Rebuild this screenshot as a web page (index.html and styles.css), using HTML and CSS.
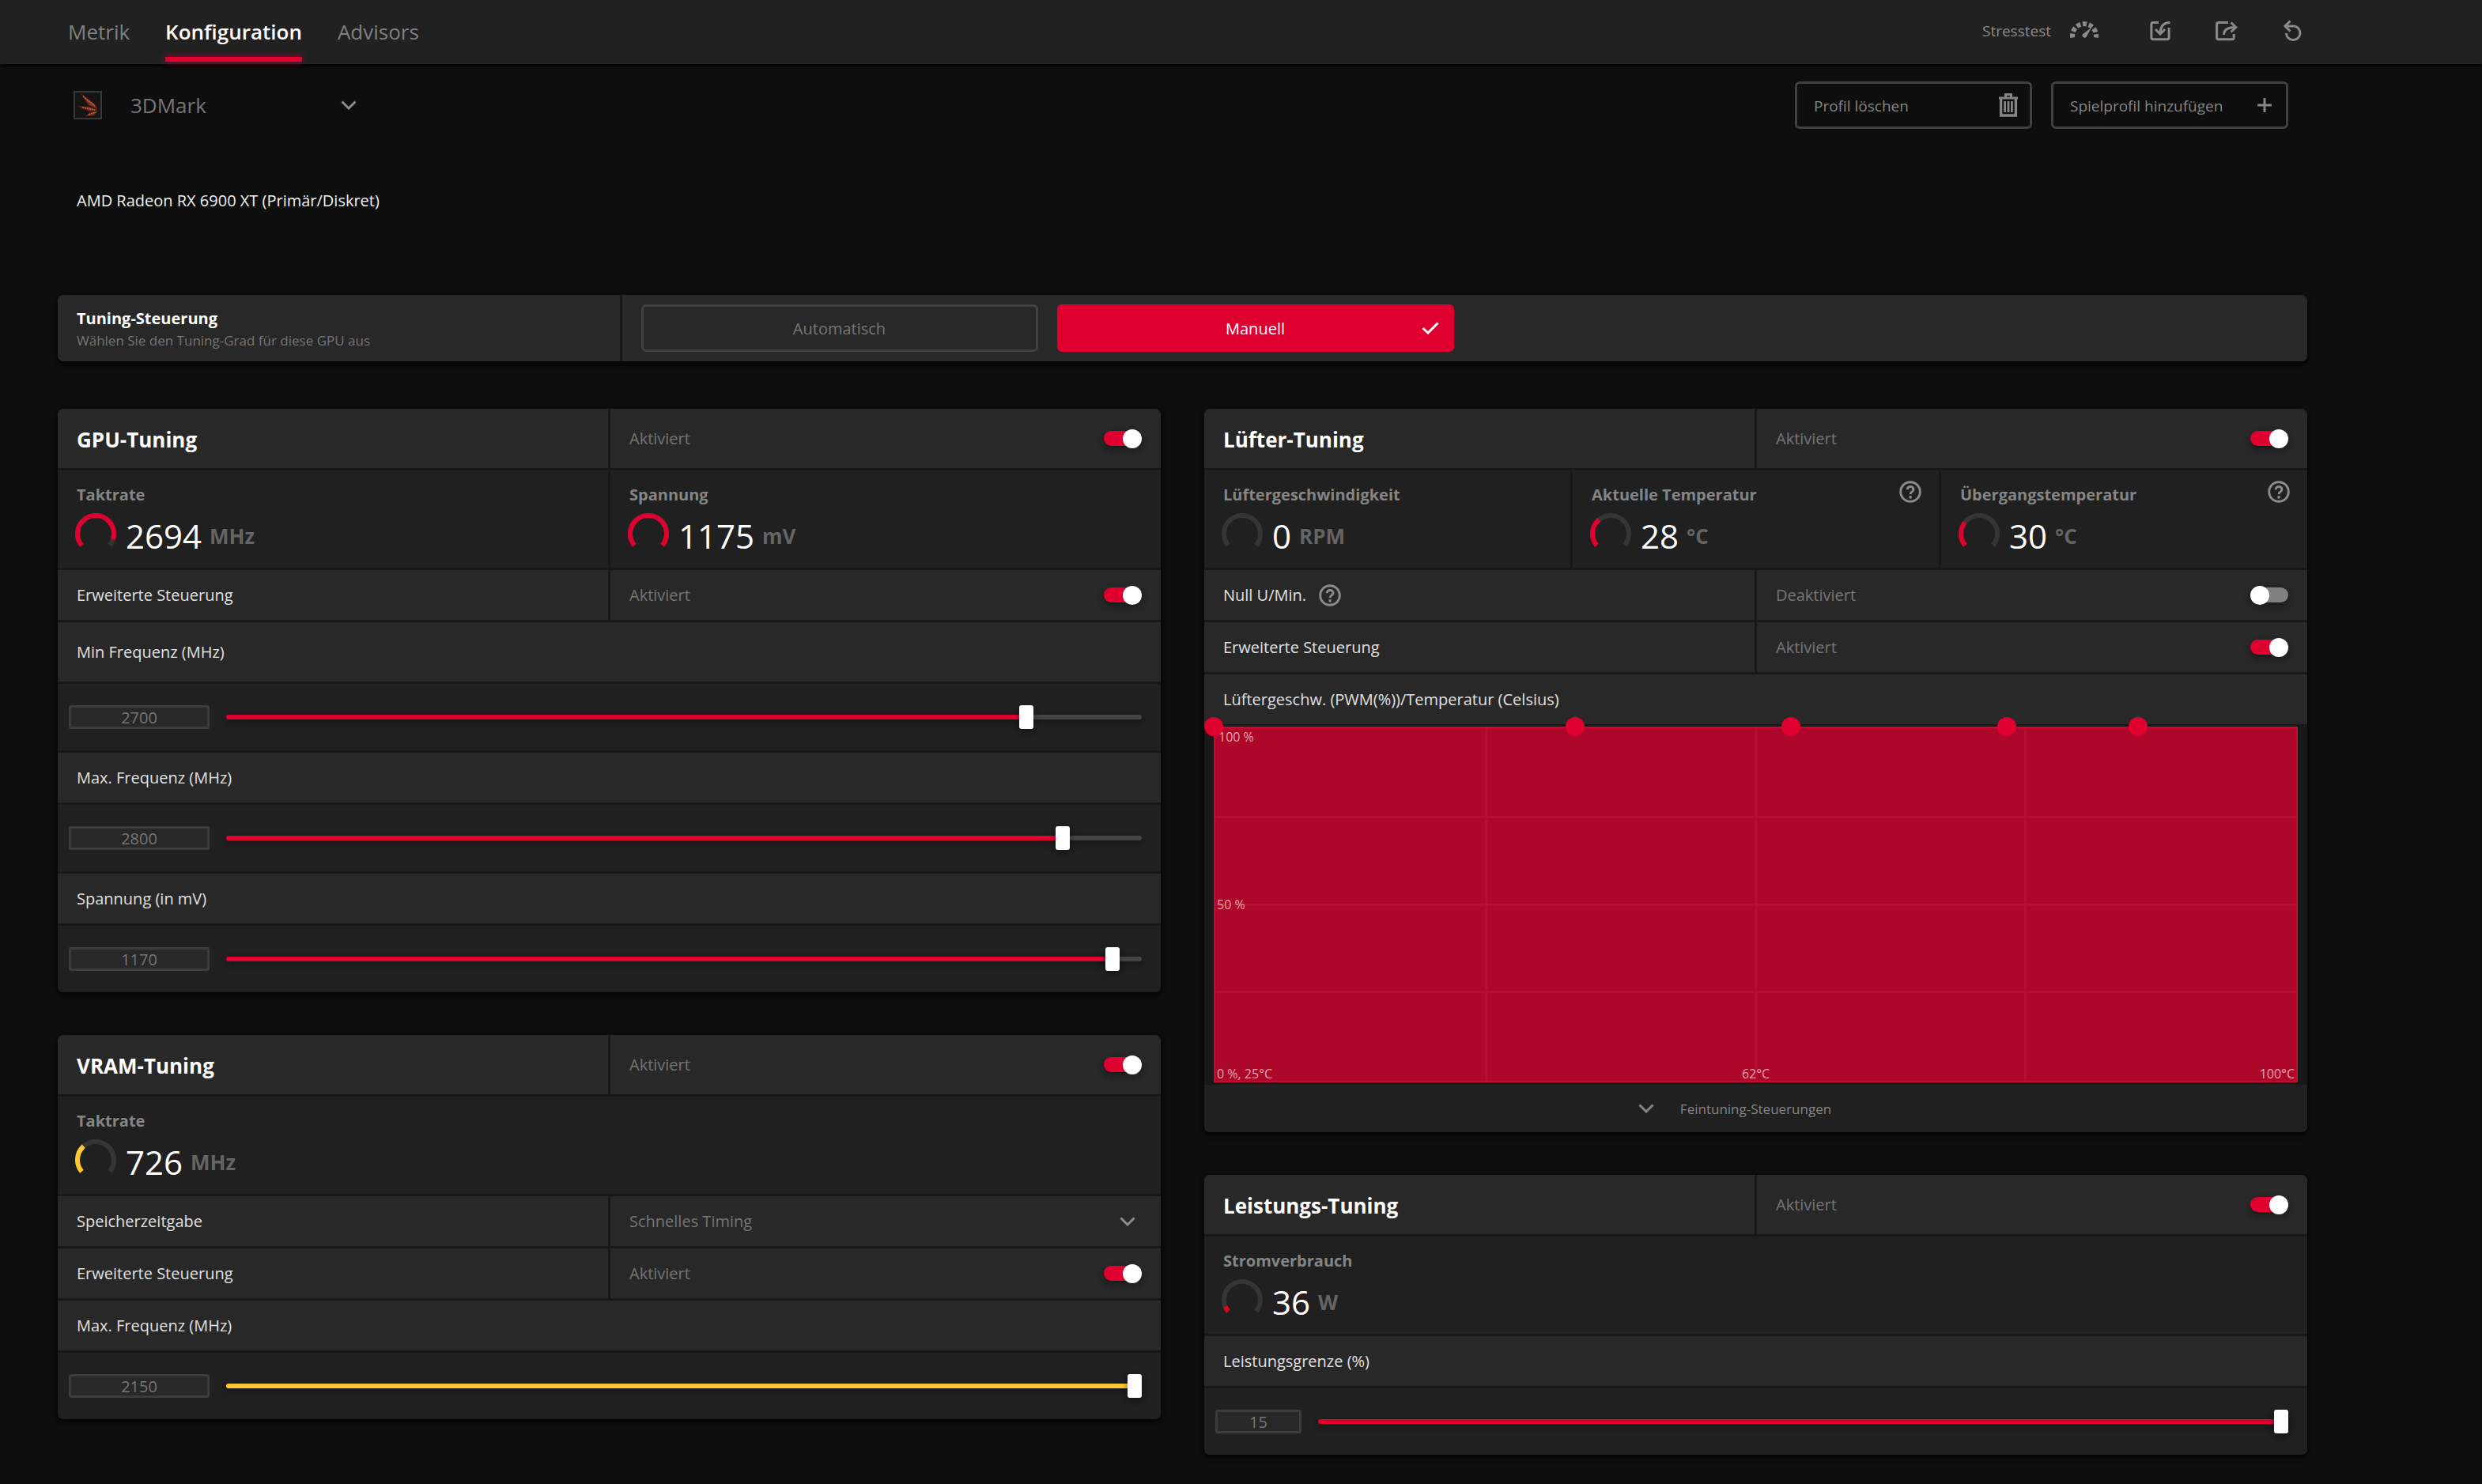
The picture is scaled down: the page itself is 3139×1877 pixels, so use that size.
FILE: index.html
```html
<!DOCTYPE html>
<html lang="de">
<head>
  <meta charset="UTF-8">
  <meta name="viewport" content="width=device-width, initial-scale=1.0">
  <title>Konfiguration</title>
  <link rel="stylesheet" href="styles.css">
</head>
<body>
  <!-- Shared icons -->
  <svg class="sprite" aria-hidden="true">
    <symbol id="icon-chevron" viewBox="0 0 20 12">
      <path d="M1.5 1.5 L10 10 L18.5 1.5" fill="none" stroke="currentColor" stroke-width="3"/>
    </symbol>
    <symbol id="icon-help" viewBox="0 0 28 28">
      <circle cx="14" cy="14" r="12.3" fill="none" stroke="currentColor" stroke-width="3"/>
      <path d="M10.2 11.2 C10.2 6.2 18 6.4 18 11 C18 14 14.1 13.8 14.1 17.2" fill="none" stroke="currentColor" stroke-width="3"/>
      <circle cx="14.1" cy="20.8" r="1.9" fill="currentColor"/>
    </symbol>
    <symbol id="gauge-track" viewBox="0 0 52 46">
      <path d="M8.4 40.8 A23 23 0 1 1 43.6 40.8" fill="none" stroke="#353535" stroke-width="6"/>
    </symbol>
  </svg>

  <header class="topbar">
    <nav class="tabs">
      <a href="#metrik">Metrik</a>
      <a href="#konfiguration" class="active">Konfiguration</a>
      <a href="#advisors">Advisors</a>
    </nav>
    <div class="tools">
      <button class="stress">
        Stresstest
        <svg width="36" height="28" viewBox="0 0 36 28" fill="none" stroke="currentColor">
          <path d="M3.2 22.6 A15 15 0 1 1 32.8 22.6" stroke-width="6" stroke-dasharray="5.2 2.7"/>
          <path d="M27 10 L20.8 21.6 A2.9 2.9 0 1 1 16.2 18 Z" fill="currentColor" stroke="none"/>
        </svg>
      </button>
      <button aria-label="Importieren">
        <svg width="28" height="28" viewBox="0 0 28 28" fill="none" stroke="currentColor" stroke-width="3">
          <path d="M12 3.4 H5 Q2.9 3.4 2.9 5.5 V22.5 Q2.9 24.8 5 24.8 H23 Q25.1 24.8 25.1 22.5 V10"/>
          <path d="M26.5 3.4 Q14 3.5 14 18"/>
          <path d="M8 12 L14 18.2 L20 12"/>
        </svg>
      </button>
      <button aria-label="Exportieren">
        <svg width="28" height="28" viewBox="0 0 28 28" fill="none" stroke="currentColor" stroke-width="3">
          <path d="M16 3.4 H4 Q1.6 3.4 1.6 5.5 V22.5 Q1.6 24.8 4 24.8 H21 Q23.2 24.8 23.2 22.5 V18"/>
          <path d="M10.5 19 Q10.5 9.5 25 9.5"/>
          <path d="M19.5 3.5 L25.8 9.5 L19.5 15.5"/>
        </svg>
      </button>
      <button aria-label="Zurücksetzen">
        <svg width="28" height="28" viewBox="0 0 28 28" fill="none" stroke="currentColor" stroke-width="3">
          <path d="M5 8 H15 A8.8 8.8 0 1 1 5.4 17"/>
          <path d="M10.5 1.5 L4 8 L10.5 14.5"/>
        </svg>
      </button>
    </div>
  </header>

  <main class="page">
    <div class="profile-bar">
      <svg class="logo" width="36" height="36" viewBox="0 0 36 36" aria-hidden="true">
        <rect x="1" y="1" width="34" height="34" fill="#151515" stroke="#383838" stroke-width="2"/>
        <path d="M9 3 L26 16 L31 23 L19 18 Z" fill="#7d2a22"/>
        <path d="M5 19 L20 20 L31 24 L20 26 Z" fill="#742420"/>
        <path d="M15 32 L21 27 L31 25 L26 31 Z" fill="#742420"/>
        <path d="M12 7 L27 19 M11 21 L27 24 M19 30 L28 27" stroke="#c4742a" stroke-width="1.4" stroke-dasharray="2 1" fill="none"/>
      </svg>
      <div class="select profile-select">
        <select aria-label="Profil">
          <option>3DMark</option>
        </select>
        <svg width="20" height="12"><use href="#icon-chevron"/></svg>
      </div>
      <div class="profile-actions">
        <button class="outline-button">
          <span>Profil löschen</span>
          <svg width="24" height="30" viewBox="0 0 24 30" fill="none" stroke="currentColor">
            <path d="M0 6 H24" stroke-width="3"/>
            <path d="M8.5 5 V1.5 H15.5 V5" stroke-width="3"/>
            <path d="M2.6 7 V28 H21.4 V7" stroke-width="3.4"/>
            <path d="M7.6 10 V24 M12 10 V24 M16.4 10 V24" stroke-width="2.8"/>
          </svg>
        </button>
        <button class="outline-button add">
          <span>Spielprofil hinzufügen</span>
          <svg width="18" height="18" viewBox="0 0 18 18" stroke="currentColor" stroke-width="3">
            <path d="M9 0 V18 M0 9 H18"/>
          </svg>
        </button>
      </div>
    </div>

    <p class="device">AMD Radeon RX 6900 XT (Primär/Diskret)</p>

    <!-- Tuning mode -->
    <section class="card mode">
      <div class="cell mode-text">
        <h2>Tuning-Steuerung</h2>
        <p>Wählen Sie den Tuning-Grad für diese GPU aus</p>
      </div>
      <div class="cell mode-buttons">
        <button>Automatisch</button>
        <button class="selected">
          Manuell
          <svg width="22" height="16" viewBox="0 0 22 16"><path d="M1.5 8 L8 14 L20.5 1.5" fill="none" stroke="#fff" stroke-width="3"/></svg>
        </button>
      </div>
    </section>

    <div class="columns">
      <div class="column">
        <!-- GPU -->
        <section class="card">
          <div class="row head">
            <div class="cell"><h2>GPU-Tuning</h2></div>
            <div class="cell"><label for="gpu-on">Aktiviert</label><input type="checkbox" class="switch" id="gpu-on" checked></div>
          </div>
          <div class="row gauges">
            <div class="cell">
              <h3>Taktrate</h3>
              <div class="gauge">
                <svg width="52" height="46" viewBox="0 0 52 46"><use href="#gauge-track"/><path class="arc" pathLength="100" stroke-dasharray="92 100" d="M8.4 40.8 A23 23 0 1 1 43.6 40.8"/></svg>
                <span class="value">2694</span><span class="unit">MHz</span>
              </div>
            </div>
            <div class="cell">
              <h3>Spannung</h3>
              <div class="gauge">
                <svg width="52" height="46" viewBox="0 0 52 46"><use href="#gauge-track"/><path class="arc" d="M8.4 40.8 A23 23 0 1 1 43.6 40.8"/></svg>
                <span class="value">1175</span><span class="unit">mV</span>
              </div>
            </div>
          </div>
          <div class="row">
            <div class="cell">Erweiterte Steuerung</div>
            <div class="cell"><label for="gpu-adv">Aktiviert</label><input type="checkbox" class="switch" id="gpu-adv" checked></div>
          </div>
          <div class="row tall">
            <div class="cell"><label for="min-freq">Min Frequenz (MHz)</label></div>
          </div>
          <div class="slider-row">
            <input type="text" class="number" value="2700" aria-label="Min Frequenz">
            <input type="range" id="min-freq" min="500" max="3000" value="2700" style="--fill: 88%">
          </div>
          <div class="row">
            <div class="cell"><label for="max-freq">Max. Frequenz (MHz)</label></div>
          </div>
          <div class="slider-row">
            <input type="text" class="number" value="2800" aria-label="Max. Frequenz">
            <input type="range" id="max-freq" min="500" max="3000" value="2800" style="--fill: 92%">
          </div>
          <div class="row">
            <div class="cell"><label for="voltage">Spannung (in mV)</label></div>
          </div>
          <div class="slider-row">
            <input type="text" class="number" value="1170" aria-label="Spannung">
            <input type="range" id="voltage" min="0" max="1200" value="1170" style="--fill: 97%">
          </div>
        </section>

        <!-- VRAM -->
        <section class="card vram">
          <div class="row head">
            <div class="cell"><h2>VRAM-Tuning</h2></div>
            <div class="cell"><label for="vram-on">Aktiviert</label><input type="checkbox" class="switch" id="vram-on" checked></div>
          </div>
          <div class="row gauges">
            <div class="cell">
              <h3>Taktrate</h3>
              <div class="gauge">
                <svg width="52" height="46" viewBox="0 0 52 46"><use href="#gauge-track"/><path class="arc" pathLength="100" stroke-dasharray="34 100" d="M8.4 40.8 A23 23 0 1 1 43.6 40.8"/></svg>
                <span class="value">726</span><span class="unit">MHz</span>
              </div>
            </div>
          </div>
          <div class="row">
            <div class="cell"><label for="timing">Speicherzeitgabe</label></div>
            <div class="cell">
              <div class="select timing-select">
                <select id="timing">
                  <option>Schnelles Timing</option>
                </select>
                <svg width="20" height="12"><use href="#icon-chevron"/></svg>
              </div>
            </div>
          </div>
          <div class="row">
            <div class="cell">Erweiterte Steuerung</div>
            <div class="cell"><label for="vram-adv">Aktiviert</label><input type="checkbox" class="switch" id="vram-adv" checked></div>
          </div>
          <div class="row">
            <div class="cell"><label for="vram-freq">Max. Frequenz (MHz)</label></div>
          </div>
          <div class="slider-row">
            <input type="text" class="number" value="2150" aria-label="Max. Frequenz">
            <input type="range" id="vram-freq" min="2000" max="2150" value="2150" style="--fill: 100%">
          </div>
        </section>
      </div>

      <div class="column">
        <!-- Fan -->
        <section class="card">
          <div class="row head">
            <div class="cell"><h2>Lüfter-Tuning</h2></div>
            <div class="cell"><label for="fan-on">Aktiviert</label><input type="checkbox" class="switch" id="fan-on" checked></div>
          </div>
          <div class="row gauges">
            <div class="cell">
              <h3>Lüftergeschwindigkeit</h3>
              <div class="gauge">
                <svg width="52" height="46" viewBox="0 0 52 46"><use href="#gauge-track"/></svg>
                <span class="value">0</span><span class="unit">RPM</span>
              </div>
            </div>
            <div class="cell">
              <h3>Aktuelle Temperatur</h3>
              <button class="help" aria-label="Hilfe"><svg width="28" height="28"><use href="#icon-help"/></svg></button>
              <div class="gauge">
                <svg width="52" height="46" viewBox="0 0 52 46"><use href="#gauge-track"/><path class="arc" pathLength="100" stroke-dasharray="35 100" d="M8.4 40.8 A23 23 0 1 1 43.6 40.8"/></svg>
                <span class="value">28</span><span class="unit">°C</span>
              </div>
            </div>
            <div class="cell">
              <h3>Übergangstemperatur</h3>
              <button class="help" aria-label="Hilfe"><svg width="28" height="28"><use href="#icon-help"/></svg></button>
              <div class="gauge">
                <svg width="52" height="46" viewBox="0 0 52 46"><use href="#gauge-track"/><path class="arc" pathLength="100" stroke-dasharray="30 100" d="M8.4 40.8 A23 23 0 1 1 43.6 40.8"/></svg>
                <span class="value">30</span><span class="unit">°C</span>
              </div>
            </div>
          </div>
          <div class="row">
            <div class="cell with-help">Null U/Min. <button class="help" aria-label="Hilfe"><svg width="28" height="28"><use href="#icon-help"/></svg></button></div>
            <div class="cell"><label for="fan-zero">Deaktiviert</label><input type="checkbox" class="switch" id="fan-zero"></div>
          </div>
          <div class="row">
            <div class="cell">Erweiterte Steuerung</div>
            <div class="cell"><label for="fan-adv">Aktiviert</label><input type="checkbox" class="switch" id="fan-adv" checked></div>
          </div>
          <div class="row">
            <div class="cell">Lüftergeschw. (PWM(%))/Temperatur (Celsius)</div>
          </div>
          <div class="chart">
            <span class="label top">100 %</span>
            <span class="label middle">50 %</span>
            <span class="label bottom">0 %, 25°C</span>
            <span class="label bottom center">62°C</span>
            <span class="label bottom right">100°C</span>
            <i class="point" style="left: 0%"></i>
            <i class="point" style="left: 33.4%"></i>
            <i class="point" style="left: 53.4%"></i>
            <i class="point" style="left: 73.4%"></i>
            <i class="point" style="left: 85.5%"></i>
          </div>
          <button class="fine-tuning">
            <svg width="20" height="12"><use href="#icon-chevron"/></svg>
            <span>Feintuning-Steuerungen</span>
          </button>
        </section>

        <!-- Power -->
        <section class="card">
          <div class="row head">
            <div class="cell"><h2>Leistungs-Tuning</h2></div>
            <div class="cell"><label for="power-on">Aktiviert</label><input type="checkbox" class="switch" id="power-on" checked></div>
          </div>
          <div class="row gauges">
            <div class="cell">
              <h3>Stromverbrauch</h3>
              <div class="gauge">
                <svg width="52" height="46" viewBox="0 0 52 46"><use href="#gauge-track"/><path class="arc" pathLength="100" stroke-dasharray="7 100" d="M8.4 40.8 A23 23 0 1 1 43.6 40.8"/></svg>
                <span class="value">36</span><span class="unit">W</span>
              </div>
            </div>
          </div>
          <div class="row">
            <div class="cell"><label for="power-limit">Leistungsgrenze (%)</label></div>
          </div>
          <div class="slider-row">
            <input type="text" class="number short" value="15" aria-label="Leistungsgrenze">
            <input type="range" id="power-limit" min="-10" max="15" value="15" style="--fill: 100%">
          </div>
        </section>
      </div>
    </div>
  </main>
</body>
</html>
```
FILE: styles.css
```css
/* General Styles */
* {
  box-sizing: border-box;
}

body {
  margin: 0;
  font-family: "Open Sans", "Noto Sans", sans-serif;
  font-size: 20px;
  line-height: 28px;
  color: #e0e0e0;
  background-color: #0e0e0e;
}

h2,
h3,
p {
  margin: 0;
}

button,
input,
select {
  font: inherit;
  color: inherit;
  margin: 0;
}

button {
  padding: 0;
  border: none;
  background: none;
  cursor: pointer;
}

svg {
  display: block;
  flex: none;
}

.sprite {
  position: absolute;
  width: 0;
  height: 0;
}

/* Top bar */
.topbar {
  display: flex;
  justify-content: space-between;
  height: 81px;
  padding: 0 225px 0 86px;
  background-color: #212121;
  box-shadow: 0 2px 5px #000;
}

.tabs {
  display: flex;
  gap: 45px;
  font-size: 26px;
}

.tabs a {
  position: relative;
  display: flex;
  align-items: center;
  padding-bottom: 2px;
  color: #808080;
  text-decoration: none;
}

.tabs .active {
  color: #fff;
  font-weight: 600;
}

.tabs .active::after {
  content: "";
  position: absolute;
  left: 0;
  right: 0;
  bottom: 3px;
  height: 6px;
  background-color: #df0030;
  box-shadow: 0 0 8px rgba(223, 0, 48, 0.7);
}

.tools {
  display: flex;
  align-items: center;
  gap: 56px;
  padding-bottom: 4px;
  color: #8a8a8a;
}

.stress {
  display: flex;
  align-items: center;
  gap: 24px;
  margin-right: 8px;
  font-size: 19px;
}

/* Profile bar */
.page {
  padding: 22px 221px 37px 73px;
}

.profile-bar {
  display: flex;
  align-items: center;
  height: 60px;
  padding: 0 24px 0 20px;
}

.select {
  display: flex;
  align-items: center;
  flex: 1;
  color: #757575;
}

.select select {
  flex: 1;
  width: 100%;
  padding: 0;
  border: none;
  appearance: none;
  background: transparent;
}

.select svg {
  color: #8a8a8a;
}

.profile-select {
  flex: 0 0 286px;
  margin-left: 36px;
  font-size: 26px;
}

.profile-select select {
  line-height: 36px;
}

.timing-select {
  padding-right: 8px;
}

.profile-actions {
  display: flex;
  gap: 24px;
  margin-left: auto;
}

.outline-button {
  display: flex;
  justify-content: space-between;
  align-items: center;
  width: 300px;
  height: 60px;
  padding: 0 15px 0 21px;
  border: 3px solid #404040;
  border-radius: 6px;
  font-size: 19px;
  color: #858585;
}

.outline-button span {
  padding-top: 2px;
}

.add {
  padding-right: 18px;
}

.device {
  margin: 77px 0 105px;
  padding-left: 24px;
  color: #f0f0f0;
}

/* Cards */
.card {
  display: grid;
  gap: 3px;
  overflow: hidden;
  border-radius: 7px;
  background-color: #181818;
  box-shadow: 0 3px 8px #000;
}

.columns {
  display: grid;
  grid-template-columns: 1fr 1fr;
  align-items: start;
  gap: 55px;
  margin-top: 60px;
}

.column {
  display: grid;
  gap: 54px;
}

.row {
  display: grid;
  grid-auto-flow: column;
  grid-auto-columns: 1fr;
  gap: 3px;
  min-height: 63px;
}

.cell {
  display: flex;
  align-items: center;
  justify-content: space-between;
  padding: 0 24px;
  background-color: #282828;
}

.cell + .cell {
  color: #757575;
}

.tall,
.head {
  min-height: 75px;
}

.head h2 {
  padding-top: 2px;
  font-size: 26px;
  font-weight: 700;
  color: #fff;
}

/* Tuning mode */
.mode {
  grid-template-columns: 1fr 3fr;
  min-height: 84px;
}

.mode-text {
  flex-direction: column;
  align-items: flex-start;
  justify-content: center;
  padding-top: 4px;
}

.mode-text h2 {
  font-size: 20px;
  font-weight: 700;
  color: #fff;
}

.mode-text p {
  font-size: 17px;
  color: #757575;
}

.mode-buttons {
  justify-content: flex-start;
  gap: 24px;
}

.mode-buttons button {
  position: relative;
  flex: 0 1 502px;
  height: 60px;
  padding-top: 2px;
  border: 3px solid #404040;
  border-radius: 6px;
  color: #757575;
}

.mode-buttons .selected {
  border-color: #df0030;
  background-color: #df0030;
  color: #fff;
}

.selected svg {
  position: absolute;
  right: 16px;
  top: 19px;
}

/* Gauges */
.gauges .cell {
  position: relative;
  flex-direction: column;
  align-items: flex-start;
  justify-content: flex-start;
  min-height: 123px;
  padding-top: 17px;
  background-color: #202020;
}

.gauges h3 {
  font-size: 20px;
  font-weight: 700;
  color: #858585;
}

.gauge {
  display: flex;
  align-items: center;
  height: 76px;
  margin-left: -2px;
}

.gauge svg {
  margin: 0 12px 12px 0;
}

.arc {
  fill: none;
  stroke: #df0030;
  stroke-width: 6;
}

.vram .arc {
  stroke: #ffc82e;
}

.value {
  font-size: 42px;
  line-height: 64px;
  color: #fff;
}

.unit {
  margin-left: 10px;
  font-size: 26px;
  font-weight: 700;
  color: #646464;
}

.help {
  color: #8a8a8a;
}

.gauges .help {
  position: absolute;
  top: 13px;
  right: 22px;
}

.with-help {
  justify-content: flex-start;
  gap: 16px;
}

/* Switches */
.switch {
  appearance: none;
  display: flex;
  align-items: center;
  width: 48px;
  height: 19px;
  border-radius: 10px;
  background-color: #808080;
  box-shadow: 0 4px 10px rgba(0, 0, 0, 0.4);
}

.switch::before {
  content: "";
  width: 24px;
  height: 24px;
  flex: none;
  border-radius: 50%;
  background-color: #fff;
}

.switch:checked {
  justify-content: flex-end;
  background-color: #df0030;
}

/* Sliders */
.slider-row {
  display: flex;
  align-items: center;
  gap: 21px;
  height: 84px;
  padding: 0 24px 0 14px;
  background-color: #202020;
}

.number {
  width: 178px;
  height: 30px;
  padding: 0;
  border: 3px solid #3c3c3c;
  border-radius: 3px;
  background-color: #282828;
  text-align: center;
  line-height: 24px;
  color: #757575;
}

.short {
  width: 109px;
}

input[type="range"] {
  appearance: none;
  flex: 1;
  height: 30px;
  background: transparent;
  --color: #df0030;
}

.vram input[type="range"] {
  --color: #ffc82e;
}

input[type="range"]::-webkit-slider-runnable-track {
  height: 6px;
  border-radius: 3px;
  background: linear-gradient(to right, var(--color) var(--fill), #444 var(--fill));
  box-shadow: 0 3px 8px rgba(0, 0, 0, 0.4);
}

input[type="range"]::-webkit-slider-thumb {
  appearance: none;
  width: 18px;
  height: 30px;
  margin-top: -12px;
  border-radius: 3px;
  background-color: #fff;
  box-shadow: 0 3px 8px rgba(0, 0, 0, 0.4);
}

/* Fan curve */
.chart {
  position: relative;
  height: 450px;
  margin: 0 12px;
  border: 2px solid #c80830;
  border-top-color: #df0030;
  background-color: #ad0829;
  background-image:
    linear-gradient(#b31031, #b31031),
    linear-gradient(#b31031, #b31031),
    linear-gradient(#b31031, #b31031),
    linear-gradient(#b31031, #b31031),
    linear-gradient(#b31031, #b31031),
    linear-gradient(#b31031, #b31031);
  background-repeat: no-repeat;
  background-size: 3px 100%, 3px 100%, 3px 100%, 100% 3px, 100% 3px, 100% 3px;
  background-position: 25% 0, 50% 0, 75% 0, 0 25%, 0 50%, 0 75%;
}

.label {
  position: absolute;
  left: 2px;
  font-size: 16px;
  line-height: 18px;
  color: #e6a3b0;
}

.label.top {
  top: 2px;
  left: 4px;
}

.label.middle {
  top: 50%;
  transform: translateY(-50%);
}

.label.bottom {
  bottom: 0;
}

.label.center {
  left: 50%;
  transform: translateX(-50%);
}

.label.right {
  left: auto;
  right: 2px;
}

.point {
  position: absolute;
  top: 0;
  width: 24px;
  height: 24px;
  margin: -14px;
  border-radius: 50%;
  background-color: #df0030;
}

.fine-tuning {
  display: grid;
  grid-template-columns: 1fr auto 1fr;
  align-items: center;
  gap: 33px;
  height: 60px;
  background-color: #202020;
  font-size: 17px;
  color: #858585;
}

.fine-tuning svg {
  justify-self: end;
}

.fine-tuning span {
  padding-top: 2px;
}
```
